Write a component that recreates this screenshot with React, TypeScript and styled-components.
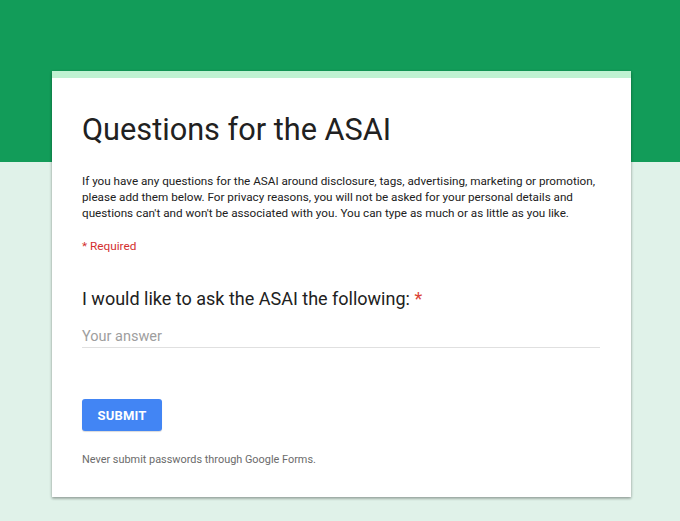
import * as React from 'react';
import styled, { createGlobalStyle } from 'styled-components';

const GlobalStyle = createGlobalStyle`
  html, body {
    margin: 0;
    padding: 0;
    background: #e0f2e9;
    font-family: Roboto, "Liberation Sans", Arial, sans-serif;
  }
`;

const Page = styled.div`
  min-height: 521px;
  background: linear-gradient(#129c59 0, #129c59 162px, #e0f2e9 162px);
  padding: 71px 49px 24px 52px;
  box-sizing: border-box;
`;

const Card = styled.div`
  background: #fff;
  border-top: 7px solid #bff2d2;
  box-shadow: 0 1px 3px rgba(0, 0, 0, 0.3), 0 2px 2px rgba(0, 0, 0, 0.12);
  padding: 30px 30px 28px 30px;
  box-sizing: border-box;
  min-height: 426px;
`;

const Title = styled.h1`
  margin: 0;
  font-size: 30.7px;
  font-weight: 400;
  color: #212121;
  line-height: 44px;
`;

const Description = styled.p`
  margin: 21px 0 0 0;
  font-size: 11.7px;
  line-height: 16px;
  color: #212121;
`;

const Required = styled.div`
  margin-top: 17px;
  font-size: 11.8px;
  line-height: 16px;
  color: #d32f2f;
`;

const Question = styled.div`
  margin-top: 33px;
  font-size: 18px;
  line-height: 24px;
  color: #212121;
`;

const Star = styled.span`
  color: #db4437;
`;

const Answer = styled.div`
  margin-top: 17px;
  width: 518px;
  border-bottom: 1px solid #e0e0e0;
  font-size: 14.5px;
  line-height: 18px;
  padding-bottom: 1px;
  color: #9e9e9e;
`;

const SubmitButton = styled.button`
  display: block;
  margin-top: 51px;
  width: 80px;
  height: 32px;
  border: none;
  border-radius: 3px;
  background: #4285f4;
  color: #fff;
  font-family: Roboto, "Liberation Sans", Arial, sans-serif;
  font-weight: 700;
  font-size: 13px;
  letter-spacing: 0.2px;
  box-shadow: 0 1px 1px rgba(0, 0, 0, 0.15);
`;

const Footnote = styled.div`
  margin-top: 22px;
  font-size: 10.9px;
  line-height: 14px;
  color: #6b6b6b;
`;

export default function App() {
  return (
    <>
      <GlobalStyle />
      <Page>
        <Card>
          <Title>Questions for the ASAI</Title>
          <Description>
            If you have any questions for the ASAI around disclosure, tags, advertising, marketing or promotion,
            please add them below. For privacy reasons, you will not be asked for your personal details and
            questions can't and won't be associated with you. You can type as much or as little as you like.
          </Description>
          <Required>* Required</Required>
          <Question>
            I would like to ask the ASAI the following: <Star>*</Star>
          </Question>
          <Answer>Your answer</Answer>
          <SubmitButton>SUBMIT</SubmitButton>
          <Footnote>Never submit passwords through Google Forms.</Footnote>
        </Card>
      </Page>
    </>
  );
}
